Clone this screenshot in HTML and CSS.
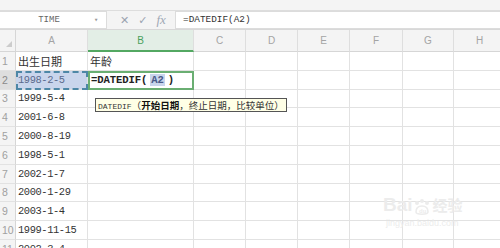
FILE: index.html
```html
<!DOCTYPE html>
<html lang="zh-CN">
<head>
    <meta charset="UTF-8">
    <title>DATEDIF</title>
    <link rel="stylesheet" href="styles.css">
</head>
<body>
    <div class="toolbar"></div>
    <div class="formula-bar">
        <div class="name-box">
            <span class="name">TIME</span>
            <span class="arrow">▾</span>
        </div>
        <div class="fx-icons">
            <span class="ic-x">✕</span>
            <span class="ic-ok">✓</span>
            <span class="ic-fx">fx</span>
        </div>
        <div class="formula-input">=DATEDIF(A2)</div>
    </div>

    <div class="sheet">
        <div class="corner"><span class="tri"></span></div>
        <div class="col-head">A</div>
        <div class="col-head active">B</div>
        <div class="col-head">C</div>
        <div class="col-head">D</div>
        <div class="col-head">E</div>
        <div class="col-head">F</div>
        <div class="col-head">G</div>
        <div class="col-head">H</div>

        <div class="row-head">1</div>
        <div class="cell cjk">出生日期</div>
        <div class="cell cjk">年龄</div>
        <div class="cell"></div><div class="cell"></div><div class="cell"></div><div class="cell"></div><div class="cell"></div><div class="cell"></div>

        <div class="row-head active">2</div>
        <div class="cell ref">1998-2-5</div>
        <div class="cell editing">=DATEDIF(<span class="ref-text">A2</span>)</div>
        <div class="cell"></div><div class="cell"></div><div class="cell"></div><div class="cell"></div><div class="cell"></div><div class="cell"></div>

        <div class="row-head">3</div>
        <div class="cell">1999-5-4</div>
        <div class="cell tip-host">
            <div class="tooltip">DATEDIF<span class="cjk">（<b>开始日期</b>，终止日期，比较单位）</span></div>
        </div>
        <div class="cell"></div><div class="cell"></div><div class="cell"></div><div class="cell"></div><div class="cell"></div><div class="cell"></div>

        <div class="row-head">4</div>
        <div class="cell">2001-6-8</div>
        <div class="cell"></div><div class="cell"></div><div class="cell"></div><div class="cell"></div><div class="cell"></div><div class="cell"></div><div class="cell"></div>

        <div class="row-head">5</div>
        <div class="cell">2000-8-19</div>
        <div class="cell"></div><div class="cell"></div><div class="cell"></div><div class="cell"></div><div class="cell"></div><div class="cell"></div><div class="cell"></div>

        <div class="row-head">6</div>
        <div class="cell">1998-5-1</div>
        <div class="cell"></div><div class="cell"></div><div class="cell"></div><div class="cell"></div><div class="cell"></div><div class="cell"></div><div class="cell"></div>

        <div class="row-head">7</div>
        <div class="cell">2002-1-7</div>
        <div class="cell"></div><div class="cell"></div><div class="cell"></div><div class="cell"></div><div class="cell"></div><div class="cell"></div><div class="cell"></div>

        <div class="row-head">8</div>
        <div class="cell">2000-1-29</div>
        <div class="cell"></div><div class="cell"></div><div class="cell"></div><div class="cell"></div><div class="cell"></div><div class="cell"></div><div class="cell"></div>

        <div class="row-head">9</div>
        <div class="cell">2003-1-4</div>
        <div class="cell"></div><div class="cell"></div><div class="cell"></div><div class="cell"></div><div class="cell"></div><div class="cell"></div><div class="cell"></div>

        <div class="row-head">10</div>
        <div class="cell">1999-11-15</div>
        <div class="cell"></div><div class="cell"></div><div class="cell"></div><div class="cell"></div><div class="cell"></div><div class="cell"></div><div class="cell"></div>

        <div class="row-head">11</div>
        <div class="cell">2002-3-4</div>
        <div class="cell"></div><div class="cell"></div><div class="cell"></div><div class="cell"></div><div class="cell"></div><div class="cell"></div><div class="cell"></div>
    </div>

    <div class="watermark">
        <div class="wm-top">Bai<span class="paw">
            <svg width="18" height="18" viewBox="0 0 18 18">
                <circle cx="4" cy="5" r="2" fill="#ececec"/>
                <circle cx="9" cy="3" r="2" fill="#ececec"/>
                <circle cx="14" cy="5" r="2" fill="#ececec"/>
                <path d="M3 14 C3 9 6 8 9 8 C12 8 15 9 15 14 C15 17 3 17 3 14 Z" fill="none" stroke="#ececec" stroke-width="1.6"/>
                <text x="6" y="15" font-size="6" fill="#ececec" font-family="Liberation Sans, sans-serif">du</text>
            </svg></span><span class="cjk">经验</span></div>
        <div class="wm-url">jingyan.baidu.com</div>
    </div>
</body>
</html>
```
FILE: styles.css
```css
body {
    margin: 0;
    width: 500px;
    height: 248px;
    overflow: hidden;
    background: #ffffff;
    font-family: "Liberation Mono", "Noto Sans CJK SC", monospace;
    color: #333333;
    position: relative;
}
.cjk {
    font-family: "Noto Sans CJK SC", sans-serif;
}
.toolbar {
    height: 10px;
    background: #f4f4f4;
    border-bottom: 1px solid #dddddd;
}
.formula-bar {
    display: flex;
    align-items: center;
    height: 18px;
    background: #f4f4f4;
    border-bottom: 1px solid #d8d8d8;
}
.name-box {
    width: 106px;
    height: 16px;
    background: #ffffff;
    border: 1px solid #dcdcdc;
    border-left: none;
    display: flex;
    align-items: center;
    font-size: 9px;
    color: #666666;
}
.name {
    flex: 1;
    text-align: center;
    padding-left: 4px;
}
.arrow {
    width: 12px;
    font-size: 7px;
    color: #999999;
}
.fx-icons {
    width: 68px;
    display: flex;
    align-items: center;
    gap: 9px;
    padding-left: 13px;
    box-sizing: border-box;
    color: #9aa3b0;
    font-family: "DejaVu Sans", sans-serif;
}
.ic-x, .ic-ok {
    font-size: 11px;
}
.ic-fx {
    font-family: "Liberation Serif", serif;
    font-style: italic;
    font-size: 13px;
    color: #a0a8b4;
}
.formula-input {
    flex: 1;
    height: 16px;
    background: #ffffff;
    border: 1px solid #dcdcdc;
    border-right: none;
    font-size: 9.4px;
    line-height: 16px;
    padding-left: 7px;
    color: #333333;
}

.sheet {
    display: grid;
    grid-template-columns: 16px 72px 106px 52px 52px 52px 53px 51px 52px;
    grid-template-rows: 22px repeat(11, 18.8px);
}
.corner {
    background: #f4f4f4;
    border-right: 1px solid #d6d6d6;
    border-bottom: 1px solid #d6d6d6;
    position: relative;
}
.tri {
    position: absolute;
    right: 3px;
    bottom: 4px;
    border-left: 6px solid transparent;
    border-bottom: 6px solid #cccccc;
}
.col-head {
    background: #f4f4f4;
    border-right: 1px solid #dedede;
    border-bottom: 1px solid #d6d6d6;
    font-family: "Liberation Sans", sans-serif;
    font-size: 10px;
    color: #a4a4a4;
    display: flex;
    align-items: center;
    justify-content: center;
}
.col-head.active {
    background: #e3eee6;
    color: #4aa05c;
    border-bottom: 2px solid #53a862;
}
.row-head {
    background: #f4f4f4;
    border-right: 1px solid #d6d6d6;
    border-bottom: 1px solid #e2e2e2;
    font-family: "Liberation Sans", sans-serif;
    font-size: 10.5px;
    color: #a0a0a0;
    display: flex;
    align-items: center;
    padding-left: 2px;
}
.row-head.active {
    background: #dedede;
    color: #8a8a8a;
}
.cell {
    border-right: 1px solid #e2e2e2;
    border-bottom: 1px solid #e2e2e2;
    font-size: 10.4px;
    letter-spacing: -0.4px;
    display: flex;
    align-items: center;
    padding-left: 2px;
    white-space: nowrap;
    color: #333333;
}
.cell.cjk {
    font-size: 11px;
    letter-spacing: 0;
}
.cell.ref {
    background: #c9d5ec;
    color: #5b6a8c;
    outline: 2px dashed #4d87a6;
    outline-offset: -2px;
}
.cell.editing {
    font-weight: bold;
    font-size: 10.6px;
    letter-spacing: -0.1px;
    color: #222222;
    outline: 2px solid #6aae72;
    outline-offset: -2px;
    padding-left: 3px;
}
.ref-text {
    background: #c9d5ec;
    color: #4a5a88;
    margin: 0 3px;
    padding: 0 1px;
}
.tip-host {
    position: relative;
    overflow: visible;
}
.tooltip {
    position: absolute;
    left: 7px;
    top: 8px;
    height: 12px;
    padding: 0 2px;
    background: #ffffe6;
    border: 1px solid #555555;
    font-size: 8px;
    line-height: 12px;
    color: #333333;
    white-space: nowrap;
    z-index: 2;
    letter-spacing: 0;
}
.tooltip .cjk {
    font-size: 9.5px;
}
.tooltip b {
    font-weight: bold;
    color: #111111;
}
.watermark {
    position: absolute;
    left: 383px;
    top: 194px;
    color: #ececec;
    font-family: "Liberation Sans", sans-serif;
}
.wm-top {
    display: flex;
    align-items: flex-end;
    font-size: 19px;
    font-weight: bold;
    line-height: 22px;
}
.wm-top .cjk {
    font-size: 15px;
    margin-left: 2px;
}
.paw {
    display: inline-flex;
}
.wm-url {
    font-size: 9px;
    margin-top: 2px;
    padding-left: 3px;
}
```
